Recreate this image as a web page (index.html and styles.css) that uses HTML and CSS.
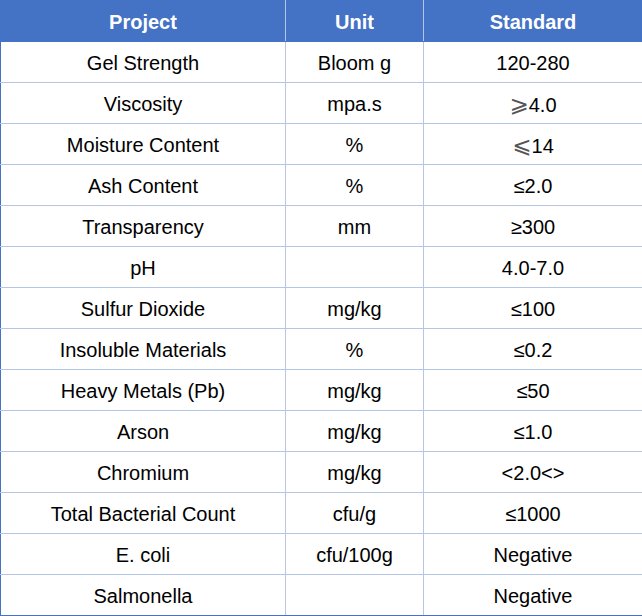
FILE: index.html
```html
<!DOCTYPE html>
<html>
<head>
<meta charset="utf-8">
<link rel="stylesheet" href="styles.css">
</head>
<body>
<table class="spec">
  <colgroup>
    <col class="c1">
    <col class="c2">
    <col class="c3">
  </colgroup>
  <thead>
    <tr><th>Project</th><th>Unit</th><th>Standard</th></tr>
  </thead>
  <tbody>
    <tr><td>Gel Strength</td><td>Bloom g</td><td>120-280</td></tr>
    <tr><td>Viscosity</td><td>mpa.s</td><td><span class="alt">⩾</span>4.0</td></tr>
    <tr><td>Moisture Content</td><td>%</td><td><span class="alt">⩽</span>14</td></tr>
    <tr><td>Ash Content</td><td>%</td><td>≤2.0</td></tr>
    <tr><td>Transparency</td><td>mm</td><td>≥300</td></tr>
    <tr><td>pH</td><td></td><td>4.0-7.0</td></tr>
    <tr><td>Sulfur Dioxide</td><td>mg/kg</td><td>≤100</td></tr>
    <tr><td>Insoluble Materials</td><td>%</td><td>≤0.2</td></tr>
    <tr><td>Heavy Metals (Pb)</td><td>mg/kg</td><td>≤50</td></tr>
    <tr><td>Arson</td><td>mg/kg</td><td>≤1.0</td></tr>
    <tr><td>Chromium</td><td>mg/kg</td><td>&lt;2.0&lt;&gt;</td></tr>
    <tr><td>Total Bacterial Count</td><td>cfu/g</td><td>≤1000</td></tr>
    <tr><td>E. coli</td><td>cfu/100g</td><td>Negative</td></tr>
    <tr><td>Salmonella</td><td></td><td>Negative</td></tr>
  </tbody>
</table>
</body>
</html>
```
FILE: styles.css
```css
html, body {
  margin: 0;
  padding: 0;
  background: #ffffff;
}
.spec {
  width: 642px;
  table-layout: fixed;
  border-collapse: collapse;
  border: 1px solid #4472c4;
  font-family: "Liberation Sans", Arial, sans-serif;
  font-size: 20px;
  color: #000;
}
.c1 { width: 285px; }
.c2 { width: 138px; }
.c3 { width: 219px; }
.spec th, .spec td {
  height: 38px;
  padding: 2px 0 0 0;
  text-align: center;
  vertical-align: middle;
  border: 1px solid #b4c6e7;
  line-height: 22px;
}
.spec th {
  background: #4472c4;
  color: #ffffff;
  font-weight: bold;
  border-top-color: #4472c4;
  border-bottom-color: #4472c4;
}
.spec th:first-child, .spec td:first-child { border-left-color: #4472c4; }
.spec th:last-child, .spec td:last-child { border-right-color: #4472c4; }
.spec tbody tr:last-child td { border-bottom-color: #4472c4; }
.alt {
  font-family: "DejaVu Sans", sans-serif;
  font-size: 23px;
  line-height: 22px;
  color: #555;
}
```
